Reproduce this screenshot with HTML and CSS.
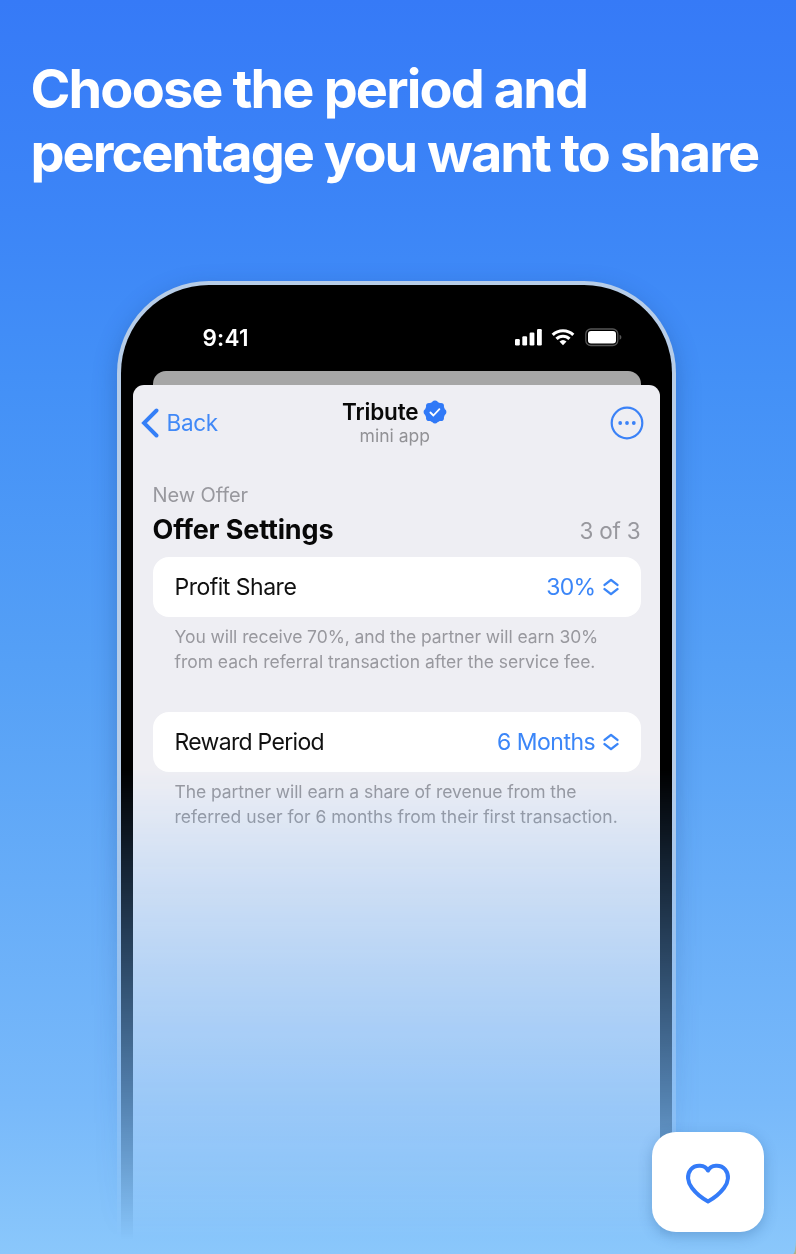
FILE: index.html
```html
<!DOCTYPE html>
<html lang="en">
<head>
<meta charset="utf-8">
<title>Tribute</title>
<link rel="stylesheet" href="styles.css">
</head>
<body>
<main class="page">
  <h1 class="headline"><span class="line-one">Choose the period and</span><br>percentage you want to share</h1>
  <div class="fade">
    <div class="phone">
      <div class="statusbar">
        <span class="time">9:41</span>
        <svg class="status-icons" width="110" height="20" viewBox="0 0 110 20">
          <g fill="#fff">
            <rect x="1" y="12" width="4.800" height="6.500" rx="1.200"/>
            <rect x="8.300" y="9.200" width="4.800" height="9.300" rx="1.200"/>
            <rect x="15.600" y="5.500" width="4.800" height="13" rx="1.200"/>
            <rect x="23" y="2" width="4.800" height="16.500" rx="1.200"/>
          </g>
          <g fill="none" stroke="#fff" stroke-width="3.100">
            <path d="M38.700 7.900a14.700 14.700 0 0 1 20.600 0"/>
            <path d="M42.500 11.900a9.200 9.200 0 0 1 13 0"/>
          </g>
          <path d="M49 18.200l-3.500-3.700a5.200 5.200 0 0 1 7 0z" fill="#fff"/>
          <rect x="71.800" y="2" width="32" height="16.500" rx="5" fill="none" stroke="#555" stroke-width="1.300"/>
          <rect x="74" y="4" width="28" height="12.500" rx="3" fill="#fff"/>
          <path d="M105.600 7.700c2.400.8 2.400 4.200 0 5z" fill="#555"/>
        </svg>
      </div>
      <div class="back-sheet"></div>
      <section class="screen">
        <header class="nav">
          <a class="back"><svg width="18" height="30" viewBox="0 0 18 30"><path d="M15.500 2.500L3 15l12.500 12.500" fill="none" stroke="#357ff7" stroke-width="3.900" stroke-linecap="round" stroke-linejoin="miter"/></svg><span>Back</span></a>
          <div class="title">
            <div class="name"><span>Tribute</span>
              <svg width="24" height="24" viewBox="0 0 24 24"><g fill="#3079f7"><circle cx="12" cy="12" r="10.300"/><circle cx="12" cy="3.700" r="3.100"/><circle cx="17.900" cy="6.100" r="3.100"/><circle cx="20.300" cy="12" r="3.100"/><circle cx="17.900" cy="17.900" r="3.100"/><circle cx="12" cy="20.300" r="3.100"/><circle cx="6.100" cy="17.900" r="3.100"/><circle cx="3.700" cy="12" r="3.100"/><circle cx="6.100" cy="6.100" r="3.100"/></g><path d="M7.400 12.500l3 3 6-6.300" fill="none" stroke="#fff" stroke-width="1.800" stroke-linecap="round" stroke-linejoin="round"/></svg>
            </div>
            <div class="subtitle">mini app</div>
          </div>
          <svg class="more" width="34" height="34" viewBox="0 0 34 34"><circle cx="17" cy="17" r="15.300" fill="none" stroke="#3b82f7" stroke-width="2.200"/><g fill="#3b82f7"><circle cx="10.200" cy="17" r="1.900"/><circle cx="17" cy="17" r="1.900"/><circle cx="23.800" cy="17" r="1.900"/></g></svg>
        </header>
        <div class="eyebrow">New Offer</div>
        <div class="section-head"><h2>Offer Settings</h2><span class="step">3 of 3</span></div>
        <div class="card"><span>Profit Share</span><span class="value"><span class="pct">30%</span><svg width="16" height="18" viewBox="0 0 16 18"><path d="M1.600 6.900L8 1.900l6.400 5M1.600 11.100l6.400 5 6.400-5" fill="none" stroke="#3b86f8" stroke-width="2.400" stroke-linecap="round" stroke-linejoin="round"/></svg></span></div>
        <p class="note"><span class="tight">You will receive 70%, and the partner will earn 30%</span><br><span class="snug">from each referral transaction after the service fee.</span></p>
        <div class="card"><span class="reward">Reward Period</span><span class="value"><span>6 Months</span><svg width="16" height="18" viewBox="0 0 16 18"><path d="M1.600 6.900L8 1.900l6.400 5M1.600 11.100l6.400 5 6.400-5" fill="none" stroke="#3b86f8" stroke-width="2.400" stroke-linecap="round" stroke-linejoin="round"/></svg></span></div>
        <p class="note"><span class="tight">The partner will earn a share of revenue from the</span><br><span>referred user for 6 months from their first transaction.</span></p>
      </section>
    </div>
  </div>
  <button class="like" aria-label="Like"><svg width="48" height="48" viewBox="0 0 48 48"><path d="M24 12.500C21.200 6.800 11.500 6 6.800 11.500c-4.300 5.200-3.400 12.500 1.200 18.500 4.200 5.500 9.500 10 16 13.400 6.500-3.400 11.800-7.900 16-13.400 4.600-6 5.500-13.300 1.200-18.500C36.500 6 26.800 6.800 24 12.500z" fill="none" stroke="#347bf8" stroke-width="4" stroke-linejoin="round"/></svg></button>
</main>
</body>
</html>
```
FILE: styles.css
```css
* { box-sizing: border-box; }
body { margin: 0; background: #acb38c; font-family: Inter, "Liberation Sans", sans-serif; }
.page {
  position: relative; height: 1254px; overflow: hidden; padding-top: 57px;
  border-bottom-right-radius: 3px 14px;
  background: linear-gradient(180deg, #367af7 0%, #3c85f7 17%, #4390f7 30%, #55a0f6 53%, #78b9fa 88%, #8ac7fb 100%);
}
.headline { margin: 0 0 0 30.500px; font-size: 54px; line-height: 64px; font-weight: 700; letter-spacing: -1.960px; color: #fff; white-space: nowrap; }
.line-one { letter-spacing: -1.850px; }
.fade {
  height: 1069px; padding: 96px 80px 0 117px;
  -webkit-mask-image: linear-gradient(180deg, #000 585px, transparent 1055px);
  mask-image: linear-gradient(180deg, #000 585px, transparent 1055px);
}
.phone {
  width: 559px; height: 1120px; padding: 0 12px; background: #000;
  border: 4px solid #b7cde8; border-bottom: 0; border-radius: 92px 92px 0 0;
  box-shadow: 0 8px 24px rgba(20, 60, 130, .32);
}
.statusbar { height: 86px; padding: 42px 36px 0 69.500px; display: flex; justify-content: space-between; align-items: flex-start; color: #fff; }
.time { font-size: 22.500px; line-height: 21px; font-weight: 600; letter-spacing: .2px; }
.status-icons { display: block; }
.back-sheet { height: 14px; margin: 0 19.500px; border-radius: 13px 13px 0 0; background: #a6a6a6; }
.screen { height: 1010px; padding: 0 19.500px; background: #eeeef3; border-radius: 11px 11px 0 0; color: #111; }
.nav { display: grid; grid-template-columns: 100px 1fr 100px; height: 97px; margin: 0 -3.500px 0 -12px; }
.back { display: flex; align-items: center; gap: 8px; height: 76px; color: #4189f7; font-size: 22.500px; letter-spacing: -.3px; }
.back span { padding-bottom: 1px; }
.title { padding-top: 13.500px; text-align: center; margin-left: 5px; }
.name { display: flex; justify-content: center; align-items: center; gap: 5px; height: 26px; font-size: 22.500px; font-weight: 600; letter-spacing: -.15px; color: #080808; }
.subtitle { font-size: 17.500px; line-height: 22px; color: #919195; }
.more { justify-self: end; margin: 21px 0 0; }
.eyebrow { font-size: 20px; line-height: 26px; letter-spacing: -.1px; color: #98989e; }
.section-head { display: flex; justify-content: space-between; height: 49px; }
h2 { margin: 0; padding-top: 5px; font-size: 27px; line-height: 34px; font-weight: 700; letter-spacing: -.150px; color: #080808; }
.step { padding-top: 7px; font-size: 22.500px; line-height: 32px; letter-spacing: -.2px; color: #98989e; }
.card { display: flex; justify-content: space-between; align-items: center; height: 60px; padding: 0 22px; border-radius: 16px; background: #fff; font-size: 23px; letter-spacing: -.5px; }
.reward { letter-spacing: -.7px; }
.value { display: flex; align-items: center; gap: 7.300px; color: #3b86f8; }
.pct { letter-spacing: -.8px; }
.note { height: 95px; margin: 0; padding: 7px 0 0 22px; font-size: 17.500px; line-height: 25px; color: #98989e; white-space: nowrap; }
.tight { letter-spacing: -.07px; }
.snug { letter-spacing: -.03px; }
.like {
  position: absolute; left: 652px; top: 1132px; width: 112px; height: 100px; padding: 0; border: 0; border-radius: 24px;
  display: flex; align-items: center; justify-content: center; background: #fff; box-shadow: 0 4px 14px rgba(30, 80, 140, .3);
}
```
